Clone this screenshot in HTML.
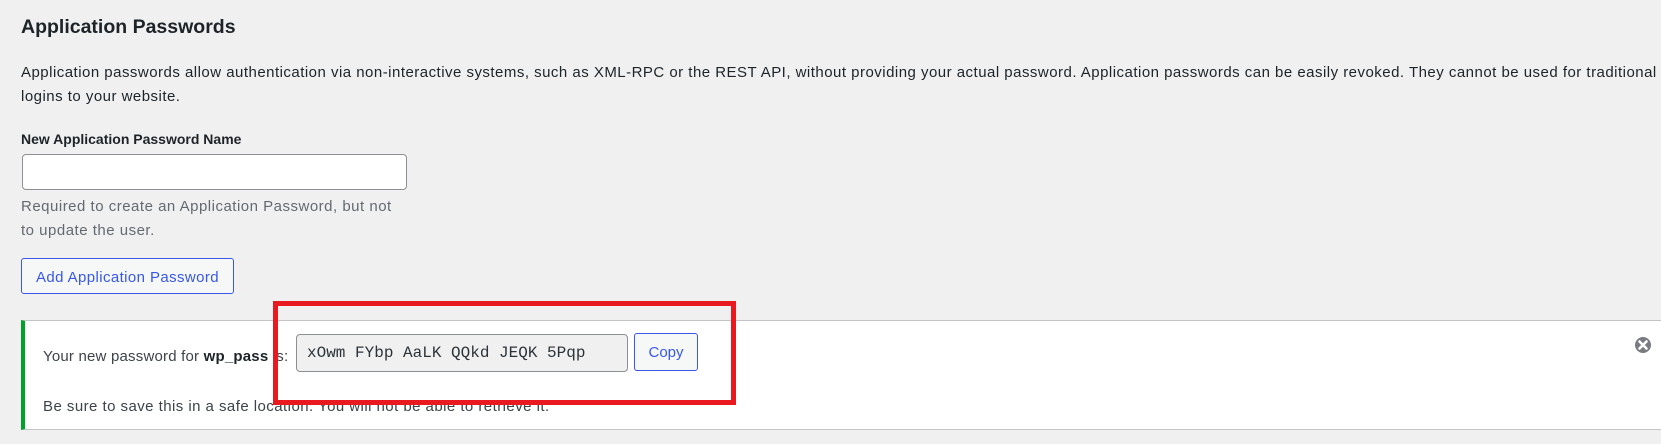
<!DOCTYPE html>
<html><head><meta charset="utf-8"><style>
*{margin:0;padding:0;box-sizing:border-box}
body{width:1661px;height:444px;background:#f0f0f1;font-family:"Liberation Sans",sans-serif;color:#1d2327;position:relative;overflow:hidden}
.a{position:absolute;white-space:nowrap}
h2{position:absolute;left:21px;top:16px;font-size:19.5px;font-weight:bold;color:#1d2327}
.p{font-size:15px;line-height:24px}
</style></head><body>
<h2>Application Passwords</h2>
<div class="a p" style="left:21px;top:61px;width:1640px;white-space:normal;letter-spacing:0.48px">Application passwords allow authentication via non-interactive systems, such as XML-RPC or the REST API, without providing your actual password. Application passwords can be easily revoked. They cannot be used for traditional logins to your website.</div>
<div class="a" style="left:21px;top:131px;font-size:14px;font-weight:bold">New Application Password Name</div>
<div class="a" style="left:22px;top:154px;width:385px;height:36px;background:#fff;border:1px solid #8c8f94;border-radius:4px"></div>
<div class="a p" style="left:21px;top:195px;color:#646970;letter-spacing:0.5px">Required to create an Application Password, but not<br>to update the user.</div>
<div class="a" style="left:21px;top:258px;width:213px;height:36px;border:1px solid #3858e9;border-radius:3px;background:#f6f7f7;color:#3858e9;font-size:15px;line-height:37px;text-align:center;letter-spacing:0.4px">Add Application Password</div>
<div class="a" style="left:21px;top:320px;width:1660px;height:110px;background:#fff;border:1px solid #c3c4c7;border-left:4px solid #00a32a"></div>
<div class="a" style="left:43px;top:348px;font-size:15px;color:#3c434a;letter-spacing:0.2px">Your new password for <b style="color:#1d2327">wp_pass</b> is:</div>
<div class="a" style="left:296px;top:334px;width:332px;height:38px;background:#f0f0f1;border:1px solid #8c8f94;border-radius:4px;font-family:'Liberation Mono',monospace;font-size:16px;line-height:36px;padding-left:10px;color:#2c3338">xOwm FYbp AaLK QQkd JEQK 5Pqp</div>
<div class="a" style="left:634px;top:333px;width:64px;height:38px;border:1px solid #3858e9;border-radius:3px;background:#f6f7f7;color:#3858e9;font-size:15px;line-height:38px;text-align:center">Copy</div>
<div class="a" style="left:43px;top:398px;font-size:15px;color:#3c434a;letter-spacing:0.45px">Be sure to save this in a safe location. You will not be able to retrieve it.</div>
<svg class="a" style="left:1634px;top:336px" width="18" height="18" viewBox="0 0 18 18"><circle cx="9" cy="9" r="8" fill="#787c82"/><path d="M5.5 5.5L12.5 12.5M12.5 5.5L5.5 12.5" stroke="#fff" stroke-width="2.6" stroke-linecap="round"/></svg>
<div class="a" style="left:273px;top:301px;width:463px;height:104px;border:5px solid #e8191f"></div>
</body></html>
